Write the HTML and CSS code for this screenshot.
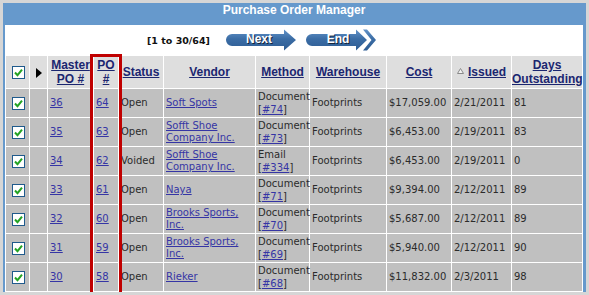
FILE: index.html
```html
<!DOCTYPE html>
<html lang="en">
<head>
    <meta charset="UTF-8">
    <title>Purchase Order Manager</title>
    <link rel="stylesheet" href="styles.css">
</head>
<body>
    <div class="panel">
        <div class="titlebar">Purchase Order Manager</div>

        <div class="pager">
            <span class="range">[1 to 30/64]</span>
            <a class="navbtn" href="#">
                <svg width="72" height="22" viewBox="0 0 72 22">
                    <defs>
                        <linearGradient id="gNext" x1="0" y1="0" x2="0" y2="1">
                            <stop offset="0" stop-color="#6393c8"/>
                            <stop offset="0.45" stop-color="#3b6da5"/>
                            <stop offset="1" stop-color="#2d5c93"/>
                        </linearGradient>
                    </defs>
                    <path d="M7 5 H59 V0.5 L71 11 L59 21.5 V17 H7 A6 6 0 0 1 7 5Z" fill="url(#gNext)"/>
                    <text class="shadow" x="35" y="15" text-anchor="middle">Next</text>
                    <text class="label" x="34" y="14" text-anchor="middle">Next</text>
                </svg>
            </a>
            <a class="navbtn" href="#">
                <svg width="72" height="22" viewBox="0 0 72 22">
                    <defs>
                        <linearGradient id="gEnd" x1="0" y1="0" x2="0" y2="1">
                            <stop offset="0" stop-color="#6393c8"/>
                            <stop offset="0.45" stop-color="#3b6da5"/>
                            <stop offset="1" stop-color="#2d5c93"/>
                        </linearGradient>
                    </defs>
                    <path d="M7 5 H51 V0.5 L62 11 L51 21.5 V17 H7 A6 6 0 0 1 7 5Z" fill="url(#gEnd)"/>
                    <path d="M58 0.5 H62 L71 11 L62 21.5 H58 L66.5 11Z" fill="url(#gEnd)"/>
                    <text class="shadow" x="34" y="15" text-anchor="middle">End</text>
                    <text class="label" x="33" y="14" text-anchor="middle">End</text>
                </svg>
            </a>
        </div>

        <table class="grid">
            <colgroup>
                <col style="width:23px"><col style="width:17px"><col style="width:45px">
                <col style="width:24px"><col style="width:44px"><col style="width:91px">
                <col style="width:53px"><col style="width:76px"><col style="width:64px">
                <col style="width:59px"><col style="width:70px">
            </colgroup>
            <thead>
                <tr>
                    <th class="boxcell">
                        <svg class="chk" width="13" height="13" viewBox="0 0 13 13"><rect x="0.5" y="0.5" width="12" height="12" fill="#fff" stroke="#1f5a8c"/><path d="M3 6.5 L5.5 9.2 L10 3.6" fill="none" stroke="#23a323" stroke-width="2"/></svg>
                    </th>
                    <th><svg width="6" height="10" viewBox="0 0 6 10"><path d="M0 0 L6 5 L0 10Z" fill="#000"/></svg></th>
                    <th><a href="#">Master PO #</a></th>
                    <th><a href="#">PO #</a></th>
                    <th><a href="#">Status</a></th>
                    <th><a href="#">Vendor</a></th>
                    <th><a href="#">Method</a></th>
                    <th><a href="#">Warehouse</a></th>
                    <th><a href="#">Cost</a></th>
                    <th><svg class="sort" width="7" height="6" viewBox="0 0 7 6"><path d="M3.5 0.5 L6.5 5.5 H0.5Z" fill="#f2f2f2" stroke="#8a8a8a"/></svg><a href="#">Issued</a></th>
                    <th><a href="#">Days Outstanding</a></th>
                </tr>
            </thead>
            <tbody id="rows"></tbody>
        </table>

        <div class="highlight"></div>
    </div>

    <script>
        const orders = [
            { master: 36, po: 64, status: "Open",   vendor: "Soft Spots",           method: "Document", ref: 74,  cost: "$17,059.00", issued: "2/21/2011", days: 81 },
            { master: 35, po: 63, status: "Open",   vendor: "Sofft Shoe Company Inc.", method: "Document", ref: 73,  cost: "$6,453.00",  issued: "2/19/2011", days: 83 },
            { master: 34, po: 62, status: "Voided", vendor: "Sofft Shoe Company Inc.", method: "Email",    ref: 334, cost: "$6,453.00",  issued: "2/19/2011", days: 0 },
            { master: 33, po: 61, status: "Open",   vendor: "Naya",                 method: "Document", ref: 71,  cost: "$9,394.00",  issued: "2/12/2011", days: 89 },
            { master: 32, po: 60, status: "Open",   vendor: "Brooks Sports, Inc.",  method: "Document", ref: 70,  cost: "$5,687.00",  issued: "2/12/2011", days: 89 },
            { master: 31, po: 59, status: "Open",   vendor: "Brooks Sports, Inc.",  method: "Document", ref: 69,  cost: "$5,940.00",  issued: "2/12/2011", days: 90 },
            { master: 30, po: 58, status: "Open",   vendor: "Rieker",               method: "Document", ref: 68,  cost: "$11,832.00", issued: "2/3/2011",  days: 98 }
        ];

        const checkbox = '<svg class="chk" width="13" height="13" viewBox="0 0 13 13"><rect x="0.5" y="0.5" width="12" height="12" fill="#fff" stroke="#1f5a8c"/><path d="M3 6.5 L5.5 9.2 L10 3.6" fill="none" stroke="#23a323" stroke-width="2"/></svg>';

        document.getElementById("rows").innerHTML = orders.map(o => `
            <tr>
                <td class="boxcell">${checkbox}</td>
                <td></td>
                <td><a href="#">${o.master}</a></td>
                <td><a href="#">${o.po}</a></td>
                <td>${o.status}</td>
                <td><a href="#">${o.vendor}</a></td>
                <td class="method">${o.method}<br>[<a href="#">#${o.ref}</a>]</td>
                <td>Footprints</td>
                <td>${o.cost}</td>
                <td>${o.issued}</td>
                <td>${o.days}</td>
            </tr>`).join("");
    </script>
</body>
</html>
```

FILE: styles.css
```css
body {
    margin: 0;
    background-color: #d6d6d6;
    font-family: "DejaVu Sans", Verdana, sans-serif;
    overflow: hidden;
}
.panel {
    position: relative;
    width: 578px;
    margin: 3px 0 0 3px;
    background-color: #fff;
    border-left: 2px solid #6699cc;
    border-right: 3px solid #6699cc;
}
.titlebar {
    height: 22px;
    line-height: 22px;
    background-color: #6699cc;
    color: #fff;
    font: bold 12px "Liberation Sans", Arial, sans-serif;
    text-align: center;
}
.pager {
    display: flex;
    align-items: center;
    height: 30px;
    padding-left: 142px;
}
.range {
    font-size: 9.5px;
    font-weight: bold;
    color: #111;
    margin-right: 15px;
}
.navbtn {
    display: block;
    height: 22px;
    margin-right: 8px;
}
.navbtn svg {
    display: block;
}
.navbtn text {
    font: bold 12px "Liberation Sans", Arial, sans-serif;
}
.navbtn .label {
    fill: #fff;
}
.navbtn .shadow {
    fill: #14243a;
}
.grid {
    table-layout: fixed;
    width: 578px;
    border-collapse: separate;
    border-spacing: 1px;
}
.grid th {
    height: 32px;
    padding: 0;
    background-color: #dedede;
    font: bold 12px/14px "Liberation Sans", Arial, sans-serif;
    text-align: center;
    vertical-align: middle;
}
.grid th a {
    color: #1b2670;
}
.grid th svg {
    display: inline-block;
    vertical-align: middle;
}
.grid th .sort {
    margin-right: 4px;
    vertical-align: 2px;
}
.grid td {
    height: 28px;
    padding: 0 0 0 2px;
    background-color: #c0c0c0;
    color: #2b2b2b;
    font-size: 10px;
    line-height: 12px;
    vertical-align: middle;
    text-align: left;
}
.grid td a {
    color: #3535a5;
}
.grid td.method {
    line-height: 13px;
}
.grid .boxcell {
    padding: 0 0 0 2px;
    text-align: center;
}
.chk {
    display: block;
    margin: 0 auto;
}
.highlight {
    position: absolute;
    left: 85px;
    top: 51px;
    width: 32px;
    height: 241px;
    box-sizing: border-box;
    border: 3px solid #c00000;
}
```
